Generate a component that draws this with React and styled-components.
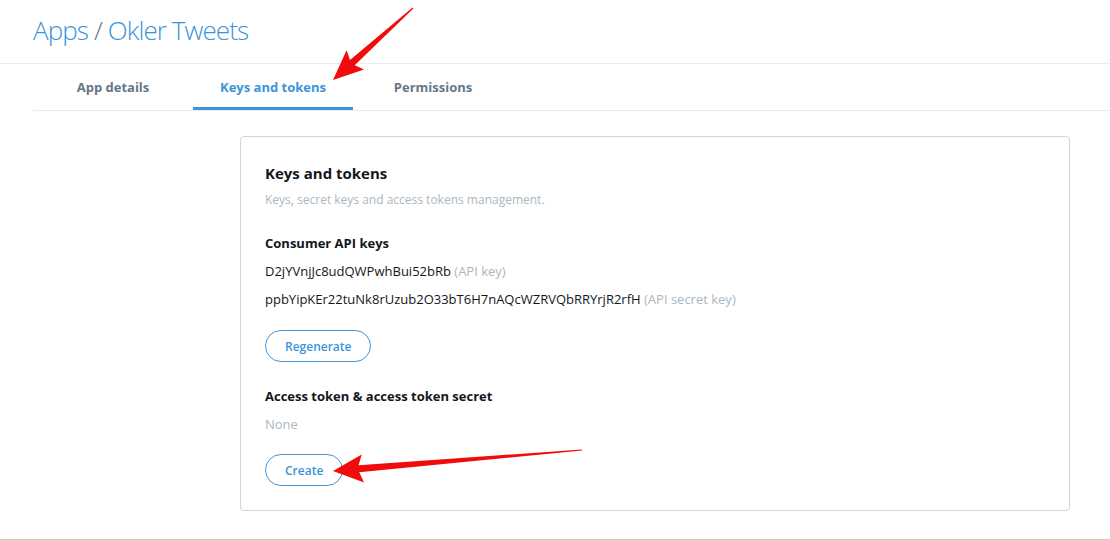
import styled, { createGlobalStyle } from "styled-components";

const GlobalStyle = createGlobalStyle`
  html, body {
    margin: 0;
    padding: 0;
    background: #fff;
  }
  body {
    font-family: "Open Sans", "Noto Sans", "Liberation Sans", sans-serif;
    color: #14171a;
  }
`;

const arrowPoints = (tail, tip, headLen, headW, shaftW, tailW) => {
  const dx = tail[0] - tip[0];
  const dy = tail[1] - tip[1];
  const len = Math.hypot(dx, dy);
  const ux = dx / len;
  const uy = dy / len;
  const nx = -uy;
  const ny = ux;
  const bx = tip[0] + ux * headLen;
  const by = tip[1] + uy * headLen;
  const pts = [
    tip,
    [bx + nx * headW + ux * 4, by + ny * headW + uy * 4],
    [bx + nx * shaftW, by + ny * shaftW],
    [tail[0] + nx * tailW, tail[1] + ny * tailW],
    [tail[0] - nx * tailW, tail[1] - ny * tailW],
    [bx - nx * shaftW, by - ny * shaftW],
    [bx - nx * headW + ux * 4, by - ny * headW + uy * 4],
  ];
  return pts.map((p) => p.map((v) => v.toFixed(1)).join(",")).join(" ");
};

const Page = styled.div`
  position: relative;
  width: 1110px;
  height: 540px;
  overflow: hidden;
  border-bottom: 1px solid #c9cdd2;
  box-sizing: border-box;
`;

const Header = styled.header`
  height: 63px;
  border-bottom: 1px solid #e6ecf0;
  padding-left: 33px;
  display: flex;
  align-items: center;
`;

const Title = styled.h1`
  margin: 0 0 4px;
  font-size: 26px;
  font-weight: 300;
  color: #3b94d9;
  letter-spacing: -0.9px;

  span {
    color: #657786;
  }
`;

const Tabs = styled.nav`
  margin-left: 33px;
  display: flex;
  border-bottom: 1px solid #e6ecf0;
`;

const Tab = styled.div`
  width: 160px;
  height: 46px;
  box-sizing: border-box;
  display: flex;
  align-items: center;
  justify-content: center;
  font-size: 13px;
  font-weight: 700;
  color: ${(p) => (p.$active ? "#3b94d9" : "#657786")};
  border-bottom: 3px solid ${(p) => (p.$active ? "#3b94d9" : "transparent")};
  padding-top: 3px;
`;

const Main = styled.main`
  padding: 25px 40px 0 240px;
`;

const Card = styled.section`
  border: 1px solid #ccd6dd;
  border-radius: 4px;
  padding: 23px 24px 23px;
  height: 375px;
  box-sizing: border-box;
`;

const CardTitle = styled.h2`
  margin: 0;
  font-size: 15px;
  font-weight: 700;
  line-height: 26px;
`;

const Subtitle = styled.p`
  margin: 0 0 15px;
  font-size: 12px;
  color: #aab8c2;
  line-height: 28px;
`;

const SectionTitle = styled.h3`
  margin: 0;
  font-size: 13px;
  font-weight: 700;
  line-height: 28px;
`;

const Line = styled.p`
  margin: 0;
  font-size: 13px;
  line-height: 28px;
  color: ${(p) => (p.$muted ? "#aab8c2" : "#14171a")};

  small {
    font-size: 13px;
    color: #aab8c2;
  }
`;

const PillButton = styled.button`
  display: block;
  margin: ${(p) => p.$mt}px 0 0;
  height: 32px;
  padding: 0 19px;
  border: 1px solid #3b94d9;
  border-radius: 16px;
  background: #fff;
  color: #3b94d9;
  font-family: inherit;
  font-size: 12px;
  font-weight: 600;
`;

const Gap = styled.div`
  height: ${(p) => p.$h}px;
`;

const Overlay = styled.svg`
  position: absolute;
  left: 0;
  top: 0;
  pointer-events: none;
`;

export default function App() {
  return (
    <>
      <GlobalStyle />
      <Page>
        <Header>
          <Title>
            Apps <span>/</span> Okler Tweets
          </Title>
        </Header>
        <Tabs>
          <Tab>App details</Tab>
          <Tab $active>Keys and tokens</Tab>
          <Tab>Permissions</Tab>
        </Tabs>
        <Main>
          <Card>
            <CardTitle>Keys and tokens</CardTitle>
            <Subtitle>Keys, secret keys and access tokens management.</Subtitle>
            <SectionTitle>Consumer API keys</SectionTitle>
            <Line>
              D2jYVnjJc8udQWPwhBui52bRb <small>(API key)</small>
            </Line>
            <Line>
              ppbYipKEr22tuNk8rUzub2O33bT6H7nAQcWZRVQbRRYrjR2rfH{" "}
              <small>(API secret key)</small>
            </Line>
            <PillButton $mt={17}>Regenerate</PillButton>
            <Gap $h={20} />
            <SectionTitle>Access token &amp; access token secret</SectionTitle>
            <Line $muted>None</Line>
            <PillButton $mt={16}>Create</PillButton>
          </Card>
        </Main>
        <Overlay width="1110" height="540">
          <polygon
            fill="#f00c0c"
            points={arrowPoints([413, 8], [333, 80], 26, 13, 3.5, 0.6)}
          />
          <polygon
            fill="#f00c0c"
            points={arrowPoints([582, 450], [333, 471], 26, 14, 3.5, 0.5)}
          />
        </Overlay>
      </Page>
    </>
  );
}
